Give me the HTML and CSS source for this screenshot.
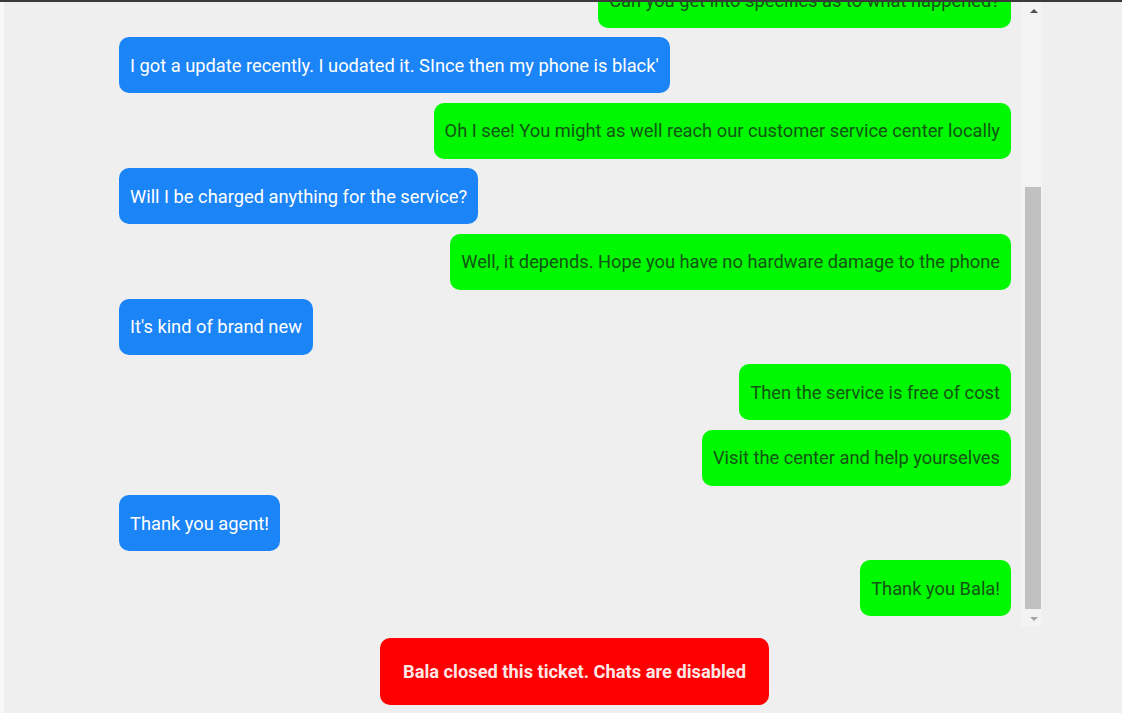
FILE: index.html
```html
<!DOCTYPE html>
<html>
<head>
<meta charset="utf-8">
<link rel="stylesheet" href="styles.css">
</head>
<body>
<div class="topline"></div>
<div class="page">
  <div class="panel">
    <div class="messages">
      <div class="list">
        <div class="row out first"><div class="bubble green">Can you get into specifics as to what happened?</div></div>
        <div class="row in"><div class="bubble blue">I got a update recently. I uodated it. SInce then my phone is black'</div></div>
        <div class="row out"><div class="bubble green">Oh I see! You might as well reach our customer service center locally</div></div>
        <div class="row in"><div class="bubble blue">Will I be charged anything for the service?</div></div>
        <div class="row out"><div class="bubble green">Well, it depends. Hope you have no hardware damage to the phone</div></div>
        <div class="row in"><div class="bubble blue">It's kind of brand new</div></div>
        <div class="row out"><div class="bubble green">Then the service is free of cost</div></div>
        <div class="row out"><div class="bubble green">Visit the center and help yourselves</div></div>
        <div class="row in"><div class="bubble blue">Thank you agent!</div></div>
        <div class="row out"><div class="bubble green">Thank you Bala!</div></div>
      </div>
    </div>
    <div class="scrollbar">
      <div class="arrow up"></div>
      <div class="track"><div class="thumb"></div></div>
      <div class="arrow down"></div>
    </div>
  </div>
  <div class="footer">
    <div class="closed">Bala closed this ticket. Chats are disabled</div>
  </div>
</div>
</body>
</html>
```

FILE: styles.css
```css
html, body {
  margin: 0;
  padding: 0;
  background: #efefef;
  font-family: Roboto, "Liberation Sans", Arial, sans-serif;
  overflow: hidden;
}
.topline {
  height: 2px;
  background: #3a3a3a;
}
.page {
  border-left: 4px solid #f7f7f7;
  height: 711px;
  box-sizing: border-box;
}
.panel {
  width: 1038px;
  height: 625px;
  display: flex;
}
.messages {
  flex: 1;
  overflow: hidden;
  padding: 0 10px 0 115px;
}
.list {
  margin-top: -30px;
  display: flex;
  flex-direction: column;
}
.row {
  display: flex;
  margin-bottom: 9.375px;
}
.row.in { justify-content: flex-start; }
.row.out { justify-content: flex-end; }
.bubble {
  height: 56px;
  box-sizing: border-box;
  padding: 0 11px 0 11px;
  display: flex;
  align-items: center;
  border-radius: 10px;
  font-size: 18.3px;
  white-space: nowrap;
}
.blue {
  background: #1b84f6;
  color: #ffffff;
}
.green {
  background: #00f800;
  color: #135513;
}
.scrollbar {
  width: 21px;
  background: #f3f3f3;
  display: flex;
  flex-direction: column;
  align-items: flex-end;
}
.arrow {
  width: 17px;
  height: 17px;
  display: flex;
  align-items: center;
  justify-content: center;
}
.arrow.up::before {
  content: "";
  border-left: 4px solid transparent;
  border-right: 4px solid transparent;
  border-bottom: 4px solid #505050;
}
.arrow.down::before {
  content: "";
  border-left: 4px solid transparent;
  border-right: 4px solid transparent;
  border-top: 4px solid #a3a3a3;
}
.track {
  flex: 1;
  width: 17px;
  display: flex;
  flex-direction: column;
  justify-content: flex-end;
  padding-bottom: 1px;
}
.thumb {
  width: 16px;
  height: 422px;
  background: #c1c1c1;
}
.footer {
  padding: 11px 0 0 376px;
}
.closed {
  width: 389px;
  height: 67px;
  box-sizing: border-box;
  background: #ff0000;
  border-radius: 10px;
  color: #fde8e8;
  font-weight: 700;
  font-size: 18.3px;
  display: flex;
  align-items: center;
  justify-content: center;
}
```
